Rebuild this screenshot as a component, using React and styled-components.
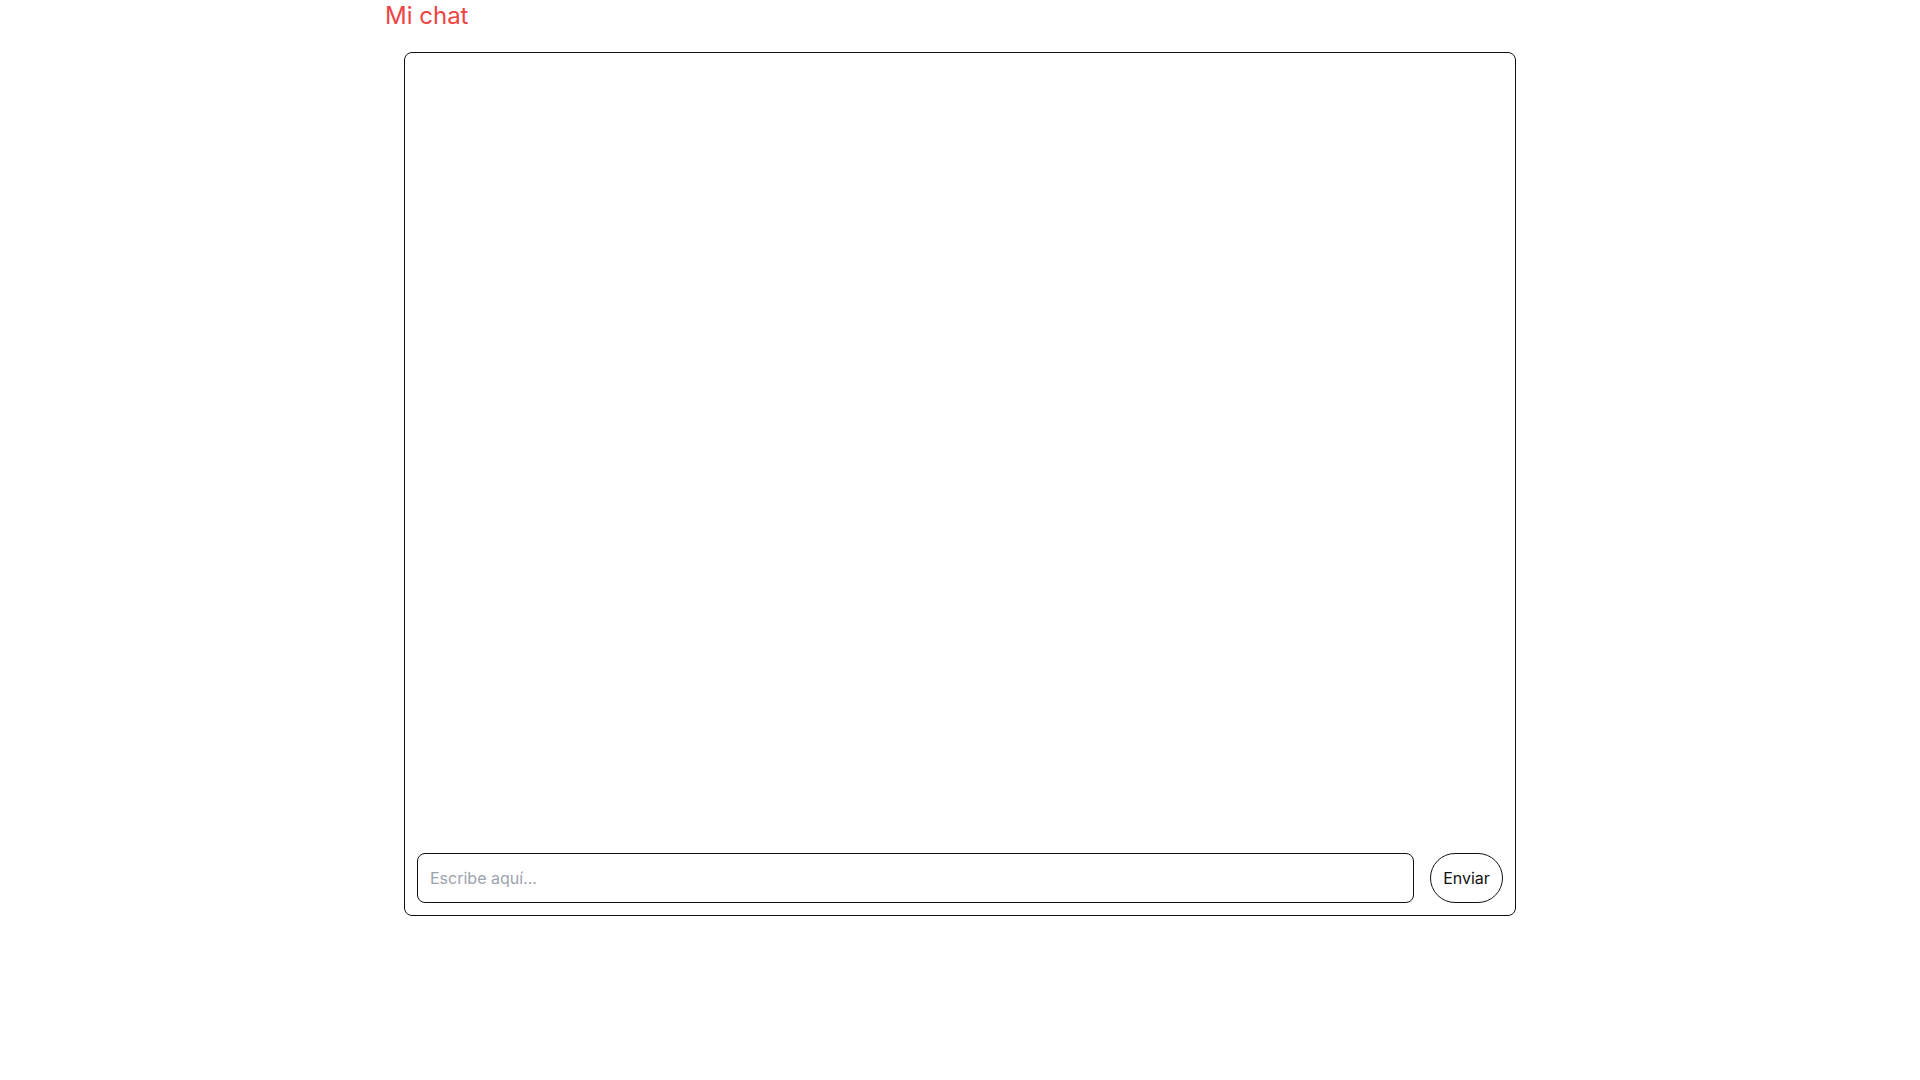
import React, { useState } from 'react';
import styled, { createGlobalStyle } from 'styled-components';

const Global = createGlobalStyle`
  body { margin: 0; font-family: Inter, "Liberation Sans", sans-serif; background: #fff; }
`;

const Page = styled.div`
  width: 1150px;
  margin: 0 auto;
`;

const Title = styled.h1`
  margin: 0;
  padding-top: 1px;
  height: 51px;
  font-size: 24px;
  line-height: 29px;
  font-weight: 400;
  color: #ef4444;
`;

const ChatBox = styled.div`
  margin: 0 19px;
  height: 864px;
  box-sizing: border-box;
  border: 1px solid #111;
  border-radius: 8px;
  padding: 12px;
  display: flex;
  flex-direction: column;
`;

const Messages = styled.div`
  flex: 1;
`;

const InputRow = styled.form`
  display: flex;
  gap: 16px;
  height: 50px;
`;

const TextInput = styled.input`
  flex: 1;
  box-sizing: border-box;
  border: 1px solid #111;
  border-radius: 8px;
  padding: 0 12px;
  font: 16px Inter, "Liberation Sans", sans-serif;
  color: #111;
  outline: none;
  &::placeholder { color: #9ca3af; }
`;

const SendButton = styled.button`
  width: 73px;
  box-sizing: border-box;
  border: 1px solid #111;
  border-radius: 25px;
  background: #fff;
  font: 16px Inter, "Liberation Sans", sans-serif;
  color: #111;
  cursor: pointer;
`;

export default function App() {
  const [text, setText] = useState('');
  return (
    <>
      <Global />
      <Page>
        <Title>Mi chat</Title>
        <ChatBox>
          <Messages />
          <InputRow onSubmit={(e) => { e.preventDefault(); setText(''); }}>
            <TextInput placeholder="Escribe aquí..." value={text} onChange={(e) => setText(e.target.value)} />
            <SendButton type="submit">Enviar</SendButton>
          </InputRow>
        </ChatBox>
      </Page>
    </>
  );
}
